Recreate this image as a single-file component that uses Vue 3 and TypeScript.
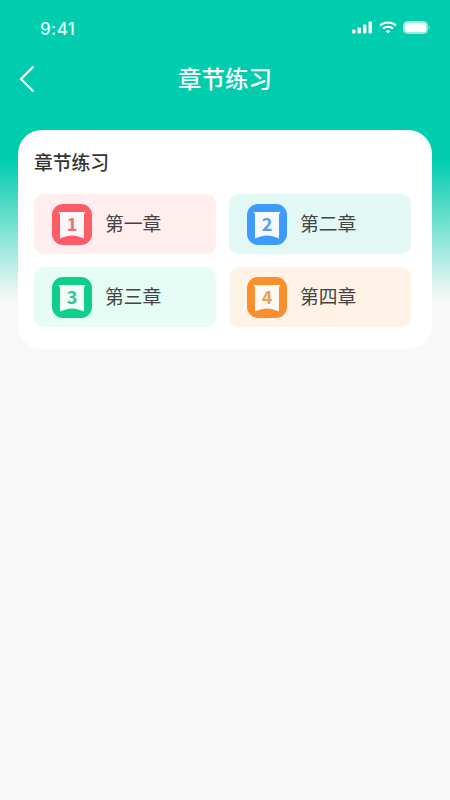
<script setup lang="ts">
interface Chapter { no: number; name: string; bg: string; color: string; num: string }
const chapters: Chapter[] = [
  { no: 1, name: '第一章', bg: '#ffeeed', color: '#fb5c66', num: '#e8707a' },
  { no: 2, name: '第二章', bg: '#e2f8f5', color: '#3f9bfb', num: '#5a9fe6' },
  { no: 3, name: '第三章', bg: '#e6fdf6', color: '#0fcf8b', num: '#2fc795' },
  { no: 4, name: '第四章', bg: '#fff3e7', color: '#fb8f2e', num: '#eda052' },
]
</script>

<template>
  <div class="page">
    <div class="status">
      <span class="time">9:41</span>
      <div class="status-icons">
        <svg width="21" height="13" viewBox="0 0 21 13">
          <rect x="0" y="8.5" width="3.4" height="4" rx="1" fill="#fff" />
          <rect x="5.5" y="6.5" width="3.4" height="6" rx="1" fill="#fff" />
          <rect x="11" y="3.5" width="3.4" height="9" rx="1" fill="#fff" />
          <rect x="16.5" y="0.5" width="3.4" height="12" rx="1" fill="#fff" />
        </svg>
        <svg width="18" height="13" viewBox="0 0 18 13" fill="none" stroke="#fff" stroke-width="2">
          <path d="M1 4.6C5.600 .5 12.400 .5 17 4.6" />
          <path d="M3.900 7.600C6.800 5 11.200 5 14.100 7.600" />
          <path d="M9 12.600 6.600 10.200C8 9 10 9 11.400 10.200Z" fill="#fff" stroke="none" />
        </svg>
        <svg width="27" height="13" viewBox="0 0 27 13">
          <rect x=".5" y=".5" width="24" height="12" rx="3.500" fill="#fff" fill-opacity=".25" stroke="#fff" stroke-opacity=".5" />
          <rect x="1.500" y="1.500" width="22" height="10" rx="2.500" fill="#fff" />
          <path d="M25.600 4.500c.9.3 1.200 1 1.200 2s-.3 1.700-1.200 2Z" fill="#fff" fill-opacity=".5" />
        </svg>
      </div>
    </div>

    <header class="nav">
      <svg class="back" width="16" height="28" viewBox="0 0 16 28" fill="none" stroke="#fff" stroke-width="2.200">
        <path d="M14.500 1.500 2 14l12.500 12.500" />
      </svg>
      <h1 class="nav-title">章节练习</h1>
    </header>

    <section class="card">
      <h2 class="card-title">章节练习</h2>
      <div class="grid">
        <div v-for="c in chapters" :key="c.no" class="tile" :style="{ background: c.bg }">
          <div class="badge" :style="{ background: c.color }">
            <svg class="flag" width="28" height="27" viewBox="0 0 28 27">
              <path d="M.5 0H27.500L26 2.500V26.500Q19 23.500 14 23.500T2 26.500V2.500Z" fill="#fff" fill-opacity=".95" />
            </svg>
            <span class="num" :style="{ color: c.num }">{{ c.no }}</span>
          </div>
          <span class="name">{{ c.name }}</span>
        </div>
      </div>
    </section>
  </div>
</template>

<style>
html, body { margin: 0; background: #f8f8f8; }
</style>

<style scoped>
.page {
  width: 450px;
  height: 800px;
  overflow: hidden;
  background: linear-gradient(180deg, #00cdae 0, #00cdae 160px, #f8f8f8 300px);
  font-family: "Noto Sans CJK SC", "Noto Sans", sans-serif;
}
.status {
  height: 54px;
  box-sizing: border-box;
  padding: 18px 18px 0 40px;
  display: flex;
  justify-content: space-between;
  align-items: flex-start;
}
.time {
  color: #e8fbf7;
  font: 500 17px/22px Inter, "Liberation Sans", sans-serif;
  letter-spacing: .4px;
}
.status-icons {
  display: flex;
  align-items: center;
  gap: 6px;
  margin-top: 3px;
  margin-right: 2px;
}
.nav {
  position: relative;
  height: 48px;
  display: flex;
  align-items: center;
  justify-content: center;
}
.back { position: absolute; left: 19px; top: 11px; }
.nav-title {
  margin: 0;
  color: #fff;
  font-size: 23.500px;
  line-height: 48px;
  font-weight: 500;
}
.card {
  margin: 28px 18px 0;
  box-sizing: border-box;
  height: 219px;
  padding: 18px 21px 0 16px;
  background: #fff;
  border-radius: 24px;
}
.card-title {
  margin: 0;
  height: 28px;
  color: #333;
  font-size: 18.800px;
  line-height: 28px;
  font-weight: 500;
}
.grid {
  margin-top: 18px;
  display: grid;
  grid-template-columns: 182px 182px;
  grid-auto-rows: 60px;
  column-gap: 13px;
  row-gap: 13px;
}
.tile {
  display: flex;
  align-items: center;
  padding-left: 18px;
  border-radius: 10px;
}
.badge {
  position: relative;
  width: 40px;
  height: 41px;
  border-radius: 11px;
  display: flex;
  align-items: center;
  justify-content: center;
  flex: none;
}
.flag { position: absolute; left: 6px; top: 8px; }
.num {
  position: relative;
  top: -1px;
  font: 700 18px/20px "Noto Sans CJK SC", "Noto Sans", sans-serif;
}
.name {
  margin-left: 13px;
  margin-top: -2px;
  color: #444;
  font-size: 18.800px;
  line-height: 26px;
}
</style>
